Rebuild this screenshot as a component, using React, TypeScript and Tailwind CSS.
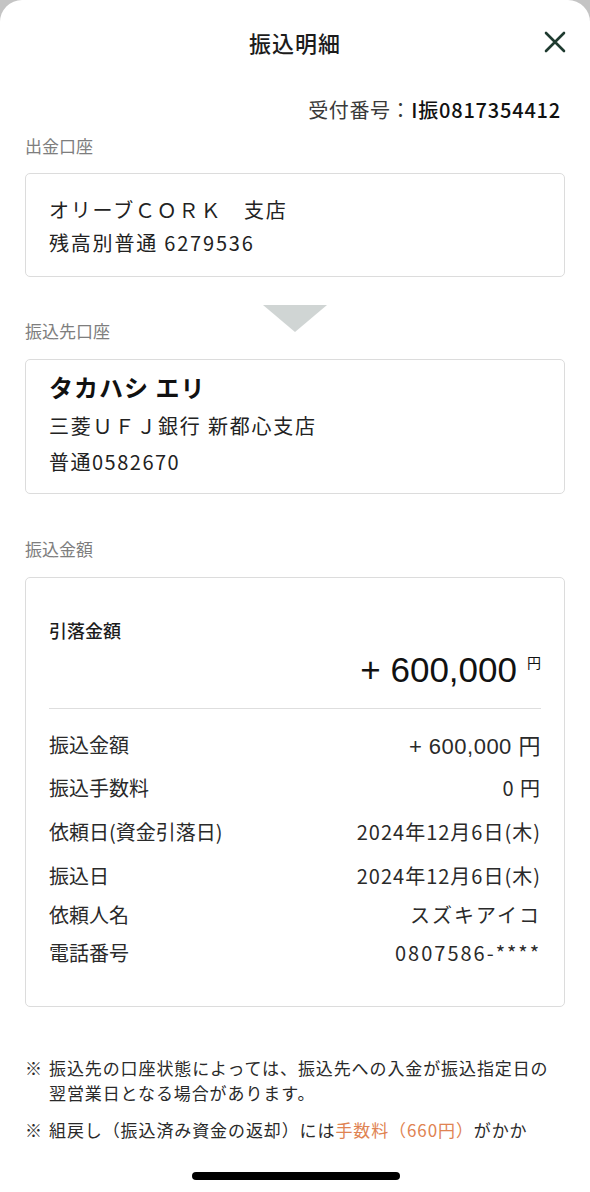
import React from "react";

const jp = "font-['Noto_Sans_CJK_JP','Noto_Sans',sans-serif]";
const num = "font-['Liberation_Sans','Noto_Sans_CJK_JP',sans-serif]";

function Label({ children }: { children: React.ReactNode }) {
  return <div className="text-[17px] leading-[24px] text-[#7e7e7e] px-[25px]">{children}</div>;
}

function Row({ label, value, className }: { label: string; value: React.ReactNode; className: string }) {
  return (
    <div className={`flex justify-between items-center h-[28px] text-[20px] text-[#2a2a2a] ${className}`}>
      <span>{label}</span>
      <span className="tracking-[1px]">{value}</span>
    </div>
  );
}

export default function App() {
  return (
    <div className={`w-[590px] h-[1192px] bg-[#c4c4c4] overflow-hidden ${jp}`}>
      <div className="relative h-full bg-white rounded-t-[22px]">
        {/* header */}
        <div className="relative flex h-[84px] items-center justify-center">
          <span className="text-[22px] font-medium text-[#1c1c1c] tracking-[1px]">振込明細</span>
          <svg className="absolute right-[24px] top-[31px]" width="22" height="22" viewBox="0 0 22 22">
            <path d="M2 2 L20 20 M20 2 L2 20" stroke="#1f3b30" strokeWidth="2.6" strokeLinecap="round" />
          </svg>
        </div>

        <div className="flex justify-end pr-[29px] pt-[13px] h-[39px] text-[20px] leading-[26px] text-[#3a3a3a]">
          <span className="tracking-[0.6px]">受付番号：</span>
          <span className="font-medium text-[#111] tracking-[0.8px]">I振0817354412</span>
        </div>

        <div className="mt-[11px]">
          <Label>出金口座</Label>
        </div>

        <div className="mx-[25px] mt-[15px] h-[104px] rounded-[5px] border border-[#dcdcdc] px-[23px] pt-[19px] text-[20px] leading-[33px] tracking-[1.8px] text-[#222]">
          <div>オリーブＣＯＲＫ　支店</div>
          <div>残高別普通 6279536</div>
        </div>

        <div className="grid grid-cols-[1fr_64px_1fr] pt-[28px] h-[66px]">
          <div className="self-end">
            <Label>振込先口座</Label>
          </div>
          <svg className="self-start" width="64" height="27" viewBox="0 0 64 27">
            <polygon points="0,0 64,0 32,27" fill="#d0d5d4" />
          </svg>
          <div />
        </div>

        <div className="mx-[25px] mt-[16px] h-[135px] rounded-[5px] border border-[#dcdcdc] px-[23px] pt-[10px] text-[#222]">
          <div className="text-[24px] leading-[34px] font-bold tracking-[1px] text-[#111]">タカハシ エリ</div>
          <div className="mt-[4px] text-[20px] leading-[36px] tracking-[1.8px]">三菱ＵＦＪ銀行 新都心支店</div>
          <div className="text-[20px] leading-[36px] tracking-[1.5px]">普通0582670</div>
        </div>

        <div className="mt-[43px]">
          <Label>振込金額</Label>
        </div>

        <div className="mx-[25px] mt-[16px] h-[430px] rounded-[5px] border border-[#dcdcdc] px-[23px] pt-[40px]">
          <div className="text-[18px] leading-[24px] font-medium text-[#1c1c1c]">引落金額</div>
          <div className="mt-[8px] flex justify-end items-start h-[40px] text-[#111]">
            <span className={`${num} text-[35px] leading-[40px]`}>+ 600,000</span>
            <span className="ml-[10px] mt-[4px] text-[14px] leading-[16px]">円</span>
          </div>
          <div className="mt-[18px] border-t border-[#dedede]" />
          <Row
            label="振込金額"
            value={
              <span className={`${num} text-[22px] tracking-[0.5px]`}>
                + 600,000 <span className={jp}>円</span>
              </span>
            }
            className="mt-[22px]"
          />
          <Row label="振込手数料" value="0 円" className="mt-[15px]" />
          <Row label="依頼日(資金引落日)" value="2024年12月6日(木)" className="mt-[16px]" />
          <Row label="振込日" value="2024年12月6日(木)" className="mt-[16px]" />
          <Row label="依頼人名" value={<span className="tracking-[2px]">スズキアイコ</span>} className="mt-[11px]" />
          <Row label="電話番号" value={<span className="tracking-[2px]">0807586-****</span>} className="mt-[10px]" />
        </div>

        <div className="mt-[48px] px-[25px] text-[17px] leading-[25px] tracking-[0.9px] text-[#2a2a2a]">
          <div className="flex">
            <span className="w-[24px] shrink-0">※</span>
            <span>振込先の口座状態によっては、振込先への入金が振込指定日の翌営業日となる場合があります。</span>
          </div>
          <div className="flex mt-[12px]">
            <span className="w-[24px] shrink-0">※</span>
            <span>
              組戻し（振込済み資金の返却）には<span className="text-[#e08352]">手数料（660円）</span>がかか
            </span>
          </div>
        </div>

        <div className="absolute bottom-[12px] left-[192px] w-[208px] h-[8px] rounded-full bg-black" />
      </div>
    </div>
  );
}
